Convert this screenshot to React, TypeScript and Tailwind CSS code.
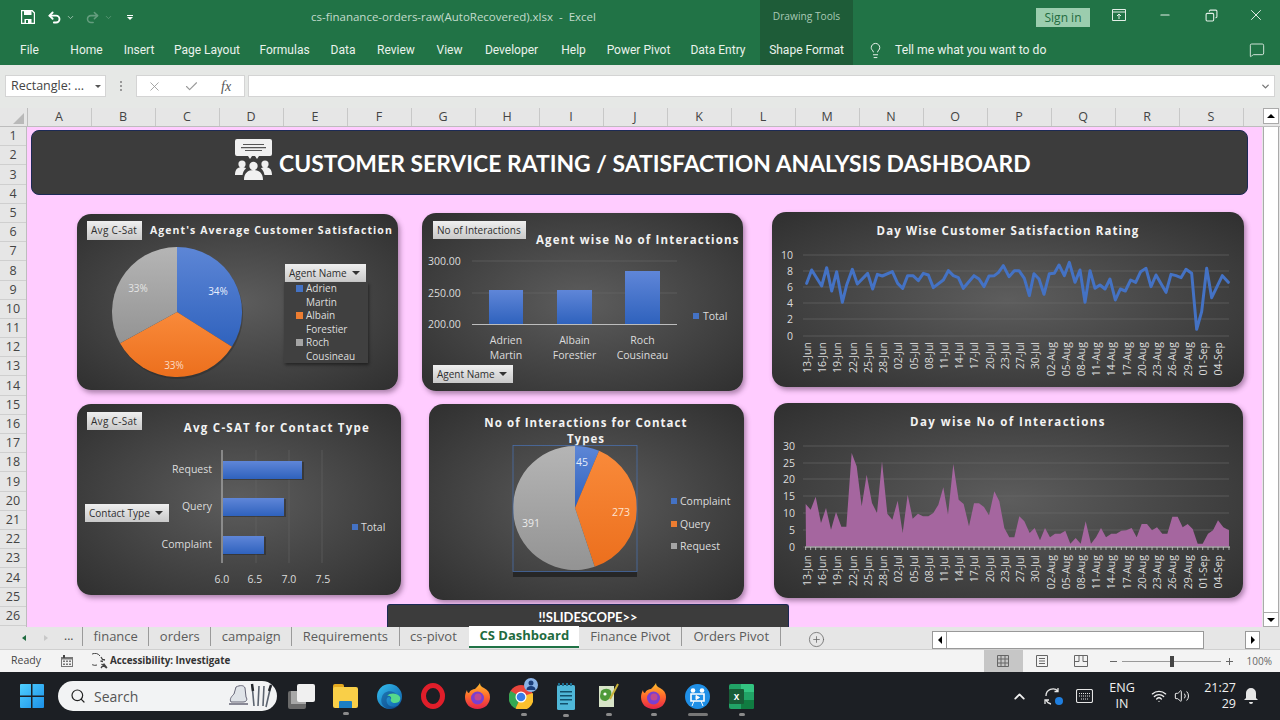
import { Check, ChevronDown, ChevronUp, CirclePlus, Copy, Lightbulb, MessageSquare, Minus, Redo2, Search, Undo2, Volume2, Wifi, X } from 'lucide-react';
import type { ReactNode } from 'react';

const ribbonTabs = [
  { name: 'Home', w: 'w-[33px]' },
  { name: 'Insert', w: 'w-[30px]' },
  { name: 'Page Layout', w: 'w-[64px]' },
  { name: 'Formulas', w: 'w-[49px]' },
  { name: 'Data', w: 'w-[26px]' },
  { name: 'Review', w: 'w-[38px]' },
  { name: 'View', w: 'w-[27px]' },
  { name: 'Developer', w: 'w-[55px]' },
  { name: 'Help', w: 'w-[27px]' },
  { name: 'Power Pivot', w: 'w-[61px]' },
  { name: 'Data Entry', w: 'w-[56px]' },
];
const columns = ['A', 'B', 'C', 'D', 'E', 'F', 'G', 'H', 'I', 'J', 'K', 'L', 'M', 'N', 'O', 'P', 'Q', 'R', 'S'];
const rows = Array.from({ length: 26 }, (_, i) => i + 1);
const dates = ['13-Jun', '16-Jun', '19-Jun', '22-Jun', '25-Jun', '28-Jun', '02-Jul', '05-Jul', '08-Jul', '11-Jul', '14-Jul', '17-Jul', '20-Jul', '23-Jul', '27-Jul', '30-Jul', '02-Aug', '05-Aug', '08-Aug', '11-Aug', '14-Aug', '17-Aug', '20-Aug', '23-Aug', '26-Aug', '29-Aug', '01-Sep', '04-Sep'];

// traced off the reference, in crop coordinates (3x from 765,205)
const ratingLine = [[125,235],[140,195],[170,243],[185,188],[200,258],[215,200],[232,292],[245,240],[262,193],[277,237],[308,205],[323,252],[337,208],[352,213],[382,200],[398,235],[413,250],[428,212],[444,212],[460,227],[475,205],[490,210],[505,248],[535,225],[550,197],[565,212],[580,218],[595,250],[627,212],[642,222],[657,245],[672,213],[688,212],[700,203],[715,182],[732,215],[748,197],[762,197],[778,220],[793,272],[807,206],[822,222],[837,268],[853,206],[868,205],[882,180],[898,212],[913,172],[930,232],[945,195],[960,292],[975,197],[990,250],[1005,240],[1020,252],[1035,222],[1051,285],[1066,252],[1081,258],[1097,225],[1112,232],[1127,200],[1143,190],[1158,245],[1173,210],[1203,262],[1218,208],[1233,212],[1248,218],[1263,193],[1280,205],[1295,373],[1310,320],[1325,190],[1340,278],[1372,212],[1390,232]];

// same idea, 3x from 765,398
const interactionsArea = [[122,318],[137,335],[152,296],[168,375],[183,330],[198,395],[213,342],[229,386],[244,386],[260,165],[275,205],[290,325],[305,230],[321,315],[336,345],[351,190],[367,347],[382,365],[398,308],[413,405],[428,290],[443,362],[459,347],[474,355],[490,355],[505,345],[520,320],[535,268],[549,350],[565,198],[581,305],[596,318],[612,385],[627,316],[642,316],[657,327],[672,352],[688,280],[703,310],[718,390],[733,418],[748,418],[763,355],[778,370],[794,405],[809,390],[825,427],[840,390],[855,418],[870,407],[886,407],[901,398],[916,437],[932,420],[947,437],[962,370],[978,437],[993,418],[1008,390],[1023,418],[1039,407],[1054,407],[1069,398],[1084,397],[1100,390],[1115,418],[1130,378],[1146,378],[1161,397],[1176,388],[1192,407],[1207,407],[1222,356],[1238,356],[1253,388],[1268,378],[1283,393],[1298,437],[1313,437],[1329,407],[1344,397],[1359,367],[1375,388],[1392,397]];

const label = "font-['Open_Sans'] fill-[#dcdcdc]";
const title = "font-['Open_Sans'] font-bold fill-[#f2f2f2]";

function slicePath(cx: number, cy: number, r: number, from: number, to: number) {
  const a = (from * 2 - 0.5) * Math.PI;
  const b = (to * 2 - 0.5) * Math.PI;
  const large = to - from > 0.5 ? 1 : 0;
  return `M${cx} ${cy}L${cx + r * Math.cos(a)} ${cy + r * Math.sin(a)}A${r} ${r} 0 ${large} 1 ${cx + r * Math.cos(b)} ${cy + r * Math.sin(b)}Z`;
}

function Card({ className, children }: { className: string; children: ReactNode }) {
  return (
    <div className={`relative shrink-0 rounded-[14px] bg-[radial-gradient(ellipse_at_center,#5d5d5d_0%,#484848_45%,#2f2f2f_100%)] shadow-[2px_3px_5px_rgba(70,40,70,0.45)] ${className}`}>
      {children}
    </div>
  );
}

function FieldButton({ text, arrow, className }: { text: string; arrow?: boolean; className: string }) {
  return (
    <div className={`absolute flex items-center justify-between px-[4px] bg-gradient-to-b from-[#efefef] to-[#c9c9c9] text-[#2e2e2e] text-[10px] ${className}`}>
      <span className="whitespace-nowrap">{text}</span>
      {arrow && <span className="w-0 h-0 mr-[2px] border-x-[4px] border-x-transparent border-t-[4px] border-t-[#333]" />}
    </div>
  );
}

function PieDefs() {
  return (
    <defs>
      <linearGradient id="pieBlue" x1="0" y1="0" x2="0" y2="1"><stop offset="0" stopColor="#5d86d6" /><stop offset="1" stopColor="#2f62bd" /></linearGradient>
      <linearGradient id="pieOrange" x1="0" y1="0" x2="0" y2="1"><stop offset="0" stopColor="#f98a3a" /><stop offset="1" stopColor="#ec6f1d" /></linearGradient>
      <linearGradient id="pieGray" x1="0" y1="0" x2="0" y2="1"><stop offset="0" stopColor="#b5b5b5" /><stop offset="1" stopColor="#939393" /></linearGradient>
      <linearGradient id="barBlue" x1="0" y1="0" x2="0" y2="1"><stop offset="0" stopColor="#5f86d8" /><stop offset="1" stopColor="#2f62bd" /></linearGradient>
    </defs>
  );
}

function AgentPie() {
  return (
    <svg viewBox="77 214 321 176" className="block w-full h-full">
      <PieDefs />
      <text x="150" y="234" fontSize="10.5" letterSpacing="1.08" className={title}>Agent's Average Customer Satisfaction</text>
      <circle cx="178" cy="314" r="65" fill="#222" opacity="0.35" />
      <path d={slicePath(177, 312, 65, 0, 0.34)} fill="url(#pieBlue)" />
      <path d={slicePath(177, 312, 65, 0.34, 0.67)} fill="url(#pieOrange)" />
      <path d={slicePath(177, 312, 65, 0.67, 1)} fill="url(#pieGray)" />
      <text x="218" y="295" fontSize="10" textAnchor="middle" className="font-['Open_Sans'] fill-[#e8eefc]">34%</text>
      <text x="174" y="369" fontSize="10" textAnchor="middle" className="font-['Open_Sans'] fill-[#fbdcc6]">33%</text>
      <text x="138" y="292" fontSize="10" textAnchor="middle" className="font-['Open_Sans'] fill-[#e4e4e4]">33%</text>
    </svg>
  );
}

function AgentLegend() {
  const items = [
    { lines: ['Adrien', 'Martin'], swatch: 'bg-[#4472c4]' },
    { lines: ['Albain', 'Forestier'], swatch: 'bg-[#ed7d31]' },
    { lines: ['Roch', 'Cousineau'], swatch: 'bg-[#a5a5a5]' },
  ];
  return (
    <div className="absolute left-[207px] top-[68px] w-[84px] h-[81px] bg-[#404040] shadow-[1px_2px_3px_rgba(0,0,0,0.45)] text-[10px] leading-[13.5px] text-[#dedede]">
      {items.map((item) => (
        <div key={item.lines[0]} className="relative pl-[22px]">
          <span className={`absolute left-[12px] top-[3px] w-[7px] h-[7px] ${item.swatch}`} />
          <div>{item.lines[0]}</div>
          <div>{item.lines[1]}</div>
        </div>
      ))}
    </div>
  );
}

function AgentBars() {
  const bars = [{ x: 489, w: 34, top: 290, name: ['Adrien', 'Martin'] }, { x: 557, w: 35, top: 290, name: ['Albain', 'Forestier'] }, { x: 625, w: 35, top: 271, name: ['Roch', 'Cousineau'] }];
  return (
    <svg viewBox="422 213 321 178" className="block w-full h-full">
      <PieDefs />
      <text x="536" y="244" fontSize="11.5" letterSpacing="1.17" className={title}>Agent wise No of Interactions</text>
      {[261, 293].map((y) => <line key={y} x1="472" x2="677" y1={y} y2={y} stroke="#6a6a6a" strokeWidth="0.6" />)}
      <line x1="472" x2="677" y1="324.5" y2="324.5" stroke="#bdbdbd" />
      {[['300.00', 265], ['250.00', 297], ['200.00', 328]].map(([t, y]) => <text key={t} x="428" y={y} fontSize="10.5" className={label}>{t}</text>)}
      {bars.map((b) => (
        <g key={b.x}>
          <rect x={b.x} y={b.top} width={b.w} height={324 - b.top} fill="url(#barBlue)" />
          <text x={b.x + b.w / 2} y="344" fontSize="10.5" textAnchor="middle" className={label}>{b.name[0]}</text>
          <text x={b.x + b.w / 2} y="359" fontSize="10.5" textAnchor="middle" className={label}>{b.name[1]}</text>
        </g>
      ))}
      <rect x="693" y="313" width="6" height="6" fill="#4472c4" />
      <text x="703" y="320" fontSize="10.5" className={label}>Total</text>
    </svg>
  );
}

function DateAxis({ top }: { top: number }) {
  return (
    <>
      {dates.map((d, i) => (
        <text key={d} transform={`translate(${807 + i * 15.22} ${top}) rotate(-90)`} textAnchor="end" dominantBaseline="central" fontSize="10.5" className={label}>{d}</text>
      ))}
    </>
  );
}

function RatingChart() {
  const pts = ratingLine.map(([x, y]) => `${x / 3 + 765},${y / 3 + 205}`).join(' ');
  return (
    <svg viewBox="772 212 472 175" className="block w-full h-full">
      <text x="1008" y="235" fontSize="11.5" letterSpacing="1.1" textAnchor="middle" className={title}>Day Wise Customer Satisfaction Rating</text>
      {[[10, 255], [8, 271], [6, 287], [4, 303], [2, 319], [0, 336]].map(([v, y]) => (
        <g key={v}>
          <line x1="803" x2="1229" y1={y} y2={y} stroke="#6c6c6c" strokeWidth="0.6" />
          <text x="793" y={y + 4} fontSize="10.5" textAnchor="end" className={label}>{v}</text>
        </g>
      ))}
      <polyline points={pts} fill="none" stroke="#4472c4" strokeWidth="3" strokeLinejoin="round" strokeLinecap="round" />
      <DateAxis top={342} />
    </svg>
  );
}

function ContactBars() {
  const bars = [{ name: 'Request', y: 461, right: 302 }, { name: 'Query', y: 498, right: 284 }, { name: 'Complaint', y: 536, right: 264 }];
  return (
    <svg viewBox="77 404 324 191" className="block w-full h-full">
      <PieDefs />
      <text x="277" y="432" fontSize="11.5" letterSpacing="1.25" textAnchor="middle" className={title}>Avg C-SAT for Contact Type</text>
      {[256, 289, 322].map((x) => <line key={x} x1={x} x2={x} y1="450" y2="563" stroke="#666" strokeWidth="0.6" />)}
      {bars.map((b) => (
        <g key={b.name}>
          <rect x="223" y={b.y + 1} width={b.right - 221} height="18" fill="#222" opacity="0.45" />
          <rect x="223" y={b.y} width={b.right - 223} height="18" fill="url(#barBlue)" />
          <text x="212" y={b.y + 12} fontSize="10.5" textAnchor="end" className={label}>{b.name}</text>
        </g>
      ))}
      <line x1="222" x2="222" y1="450" y2="563" stroke="#c4c4c4" />
      {[['6.0', 222], ['6.5', 255], ['7.0', 289], ['7.5', 323]].map(([t, x]) => <text key={t} x={x} y="583" fontSize="10.5" textAnchor="middle" className={label}>{t}</text>)}
      <rect x="352" y="524" width="6" height="6" fill="#4472c4" />
      <text x="361" y="531" fontSize="10.5" className={label}>Total</text>
    </svg>
  );
}

function ContactPie() {
  const a = 45 / 709;
  const b = a + 273 / 709;
  return (
    <svg viewBox="429 404 315 196" className="block w-full h-full">
      <PieDefs />
      <text x="586" y="427" fontSize="11.5" letterSpacing="1.05" textAnchor="middle" className={title}>No of Interactions for Contact</text>
      <text x="586" y="443" fontSize="11.5" letterSpacing="1.05" textAnchor="middle" className={title}>Types</text>
      <rect x="513" y="571" width="124" height="6" fill="#262626" />
      <path d={slicePath(575, 508, 62, 0, a)} fill="url(#pieBlue)" />
      <path d={slicePath(575, 508, 62, a, b)} fill="url(#pieOrange)" />
      <path d={slicePath(575, 508, 62, b, 1)} fill="url(#pieGray)" />
      <rect x="513" y="445.5" width="124" height="126" fill="none" stroke="#4a6ea8" strokeWidth="0.8" />
      <text x="582" y="466" fontSize="10.5" textAnchor="middle" className="font-['Open_Sans'] fill-[#e4ecfa]">45</text>
      <text x="621" y="516" fontSize="10.5" textAnchor="middle" className="font-['Open_Sans'] fill-[#fde3d0]">273</text>
      <text x="531" y="527" fontSize="10.5" textAnchor="middle" className="font-['Open_Sans'] fill-[#ececec]">391</text>
      {[['Complaint', 501, '#4472c4'], ['Query', 524, '#ed7d31'], ['Request', 546, '#a5a5a5']].map(([t, y, c]) => (
        <g key={t as string}>
          <rect x="671" y={(y as number) - 3} width="6" height="6" fill={c as string} />
          <text x="680" y={(y as number) + 4} fontSize="10.5" className={label}>{t}</text>
        </g>
      ))}
    </svg>
  );
}

function InteractionsChart() {
  const pts = interactionsArea.map(([x, y]) => `${x / 3 + 765},${y / 3 + 398}`);
  return (
    <svg viewBox="774 403 469 195" className="block w-full h-full">
      <text x="1008" y="426" fontSize="11.5" letterSpacing="1.4" textAnchor="middle" className={title}>Day wise No of Interactions</text>
      {[[30, 446], [25, 463], [20, 479], [15, 496], [10, 513], [5, 530], [0, 547]].map(([v, y]) => (
        <g key={v}>
          <line x1="803" x2="1229" y1={y} y2={y} stroke="#6c6c6c" strokeWidth="0.6" />
          <text x="795" y={y + 4} fontSize="10.5" textAnchor="end" className={label}>{v}</text>
        </g>
      ))}
      <polygon points={`806,546.5 ${pts.join(' ')} 1229,546.5`} fill="#a5669f" />
      <line x1="805" x2="1230" y1="547" y2="547" stroke="#c9c9c9" />
      {interactionsArea.map(([x]) => <line key={x} x1={x / 3 + 765} x2={x / 3 + 765} y1="547" y2="550" stroke="#c9c9c9" strokeWidth="0.8" />)}
      <DateAxis top={555} />
    </svg>
  );
}

function PeopleIcon() {
  return (
    <svg viewBox="0 0 37 41" className="w-[37px] h-[41px] -mt-[6px] fill-[#f0f0f0]">
      <path d="M2 0h33a2 2 0 0 1 2 2v13a2 2 0 0 1-2 2H24l-2 3-2-3h-3l-2 3-2-3H2a2 2 0 0 1-2-2V2a2 2 0 0 1 2-2z" />
      <path d="M8 5h21v1H8zM6 8h25v1.2H6zM10 11h17v1H10z" fill="#555" />
      <circle cx="7" cy="25" r="3.6" /><circle cx="30" cy="25" r="3.6" /><circle cx="18.5" cy="27" r="4.2" />
      <path d="M0 36c0-6 3-8 7-8 2 0 3 .5 4 1.5-2 1.500-3 3.500-3.500 6.500zM37 36c0-6-3-8-7-8-2 0-3 .5-4 1.500 2 1.500 3 3.500 3.500 6.500zM9 41c0-7 4-10 9.500-10S28 34 28 41z" />
    </svg>
  );
}

function QuickAccess() {
  return (
    <div className="w-[311px] shrink-0 flex items-center pl-[21px] text-white">
      <svg viewBox="0 0 14 14" className="w-[14px] h-[14px]">
        <path d="M0.5 0.500H11L13.500 3V13.500H0.500z" fill="none" stroke="#fff" strokeWidth="1.400" />
        <path d="M3 1h7.500v4H3zM3.500 9h7v4.500h-7z" fill="#fff" />
        <path d="M5 10h2v3H5z" fill="#217346" />
      </svg>
      <Undo2 size={15} strokeWidth={3} className="ml-[12px]" />
      <ChevronDown size={9} className="ml-[4px] opacity-70" />
      <Redo2 size={15} strokeWidth={2.500} className="ml-[10px] opacity-30" />
      <ChevronDown size={9} className="ml-[4px] opacity-30" />
      <span className="ml-[14px] flex flex-col items-center gap-[1px]">
        <span className="w-[6px] h-[1px] bg-white" />
        <span className="w-0 h-0 border-x-[3px] border-x-transparent border-t-[3px] border-t-white" />
      </span>
    </div>
  );
}

function TitleBar() {
  return (
    <div className="h-[34px] flex items-stretch bg-[#217346] text-[#c3dbcc] text-[11.5px]">
      <QuickAccess />
      <div className="w-[449px] shrink-0 flex items-center whitespace-nowrap">cs-finanance-orders-raw(AutoRecovered).xlsx&nbsp; -&nbsp; Excel</div>
      <div className="w-[93px] shrink-0 bg-[#1e5c38] flex items-center justify-center text-[10.2px] text-[#a9c9b5]">Drawing Tools</div>
      <div className="flex-1 flex items-start justify-end text-[#e3efe7]">
        <div className="mt-[8px] w-[54px] h-[19px] bg-[#9bcdae] text-[#1f6b40] text-[12px] flex items-center justify-center">Sign in</div>
        <div className="w-[190px] h-[30px] flex items-center">
          <svg viewBox="0 0 14 12" className="ml-[22px] w-[14px] h-[12px] fill-none stroke-current"><path d="M.5.500h13v11H.5zM.5 3h13M7 10V5M5 7l2-2 2 2" /></svg>
          <Minus size={14} className="ml-[32px]" />
          <Copy size={13} className="ml-[33px] -scale-x-100" />
          <X size={18} strokeWidth={1.300} className="ml-[29px]" />
        </div>
      </div>
    </div>
  );
}

function Ribbon() {
  return (
    <div className="h-[31px] flex items-stretch bg-[#217346] text-[#eaf2ec] text-[12px] font-['Roboto']">
      <div className="flex items-center pl-[20px] pt-[1px] w-[70px] shrink-0">File</div>
      <div className="w-[690px] shrink-0 flex items-center gap-[21px] pt-[1px] whitespace-nowrap">
        {ribbonTabs.map((t) => <span key={t.name} className={`${t.w} shrink-0 flex justify-center`}>{t.name}</span>)}
      </div>
      <div className="w-[93px] shrink-0 bg-[#1e5c38] flex items-center justify-center pt-[1px]">Shape Format</div>
      <div className="flex items-center flex-1 pt-[1px]">
        <Lightbulb size={17} strokeWidth={1.400} className="ml-[14px]" />
        <span className="ml-[11px] text-[12.2px]">Tell me what you want to do</span>
        <MessageSquare size={16} strokeWidth={1.300} className="ml-auto mr-[15px]" />
      </div>
    </div>
  );
}

function FormulaBar() {
  return (
    <div className="h-[43px] bg-[#e6e8e6] flex items-start pt-[10px] pl-[5px] pr-[5px] text-[12.500px] text-[#444]">
      <div className="w-[101px] h-[22px] bg-white border border-[#d4d4d4] flex items-center justify-between pl-[5px] pr-[4px] pt-[1px]">
        <span>Rectangle: ...</span>
        <span className="w-0 h-0 border-x-[3px] border-x-transparent border-t-[3px] border-t-[#555]" />
      </div>
      <div className="w-[30px] flex flex-col items-center justify-center gap-[2px] h-[22px]">
        <span className="w-[2px] h-[2px] bg-[#999]" /><span className="w-[2px] h-[2px] bg-[#999]" /><span className="w-[2px] h-[2px] bg-[#999]" />
      </div>
      <div className="w-[109px] h-[22px] bg-white border border-[#d4d4d4] flex items-center pl-[10px] text-[#9a9a9a]">
        <X size={15} strokeWidth={1.400} />
        <Check size={15} strokeWidth={1.800} className="ml-[22px]" />
        <span className="ml-[22px] font-['Liberation_Serif'] italic text-[14px] text-[#555]">fx</span>
      </div>
      <div className="ml-[3px] flex-1 h-[22px] bg-white border border-[#d4d4d4] flex items-center justify-end pr-[3px]">
        <ChevronDown size={11} strokeWidth={3} className="text-[#777]" />
      </div>
    </div>
  );
}

function ColumnHeader() {
  return (
    <div className="h-[19px] flex bg-[#e6e6e6] text-[12.500px] text-[#444] border-b border-[#bdbdbd]">
      <div className="w-[27.5px] shrink-0 border-r border-[#bdbdbd] flex items-end justify-end pr-[3px] pb-[2px]">
        <span className="w-0 h-0 border-l-[11px] border-l-transparent border-b-[11px] border-b-[#b9b9b9]" />
      </div>
      {columns.map((c) => (
        <div key={c} className="w-[64px] shrink-0 border-r border-[#c8c8c8] flex items-center justify-center pt-[1px]">{c}</div>
      ))}
      <div className="flex-1 flex justify-end pr-[1px]">
        <div className="w-[16px] h-[16px] bg-white border border-[#aaa] flex items-center justify-center">
          <span className="w-0 h-0 border-x-[4px] border-x-transparent border-b-[4px] border-b-black" />
        </div>
      </div>
    </div>
  );
}

function Sheet() {
  return (
    <div className="h-[500px] flex">
      <div className="w-[27px] shrink-0 bg-[#e6e6e6] border-r border-[#bdbdbd] text-[12.500px] text-[#444]">
        {rows.map((r) => (
          <div key={r} className="h-[19.2px] flex items-center justify-center border-b border-[#cfcfcf] pt-[1px]">{r}</div>
        ))}
      </div>
      <div className="w-[1235px] shrink-0 bg-[#ffccff] overflow-hidden">
        <div className="ml-[4px] mt-[3px] w-[1217px] h-[65px] rounded-[8px] bg-[#3c3c3c] border border-[#1c2a55] flex items-center pl-[203px]">
          <PeopleIcon />
          <span className="ml-[7px] mt-[2px] text-white font-['Lato'] font-bold text-[22.9px] whitespace-nowrap">CUSTOMER SERVICE RATING / SATISFACTION ANALYSIS DASHBOARD</span>
        </div>
        <div className="mt-[17px] h-[191px] flex items-start pl-[50px]">
          <Card className="mt-[2px] w-[321px] h-[176px]">
            <AgentPie />
            <FieldButton text="Avg C-Sat" className="left-[10px] top-[7px] w-[55px] h-[19px] tracking-[0.3px]" />
            <FieldButton text="Agent Name" arrow className="left-[208px] top-[50px] w-[81px] h-[18px]" />
            <AgentLegend />
          </Card>
          <Card className="ml-[24px] mt-[1px] w-[321px] h-[178px]">
            <AgentBars />
            <FieldButton text="No of Interactions" className="left-[11px] top-[8px] w-[93px] h-[18px]" />
            <FieldButton text="Agent Name" arrow className="left-[11px] top-[152px] w-[80px] h-[18px]" />
          </Card>
          <Card className="ml-[29px] w-[472px] h-[175px]">
            <RatingChart />
          </Card>
        </div>
        <div className="h-[197px] flex items-start pl-[50px]">
          <Card className="mt-[1px] w-[324px] h-[191px]">
            <ContactBars />
            <FieldButton text="Avg C-Sat" className="left-[10px] top-[8px] w-[55px] h-[18px] tracking-[0.3px]" />
            <FieldButton text="Contact Type" arrow className="left-[8px] top-[100px] w-[84px] h-[18px]" />
          </Card>
          <Card className="ml-[28px] mt-[1px] w-[315px] h-[196px]">
            <ContactPie />
          </Card>
          <Card className="ml-[30px] w-[469px] h-[195px]">
            <InteractionsChart />
          </Card>
        </div>
        <div className="mt-[4px] ml-[360px] w-[402px] h-[26px] bg-[#3c3c3c] border-t border-x border-[#1c2a55] rounded-t-[3px] text-white font-['Lato'] font-bold text-[13px] text-center pt-[3px]">!!SLIDESCOPE&gt;&gt;</div>
      </div>
      <div className="w-[18px] shrink-0 bg-[#e6e6e6] flex flex-col items-end pr-[1px]">
        <div className="w-[16px] flex-1 bg-white border-x border-[#aaa]" />
        <div className="w-[16px] h-[15px] bg-white border border-[#aaa] flex items-center justify-center">
          <span className="w-0 h-0 border-x-[4px] border-x-transparent border-t-[4px] border-t-black" />
        </div>
      </div>
    </div>
  );
}

function SheetTabs() {
  const left = ['finance', 'orders', 'campaign', 'Requirements', 'cs-pivot'];
  const right = ['Finance Pivot', 'Orders Pivot'];
  return (
    <div className="h-[23px] flex bg-[#e6e6e6] border-b border-[#d0d0d0] text-[13px] text-[#5c5c5c]">
      <div className="w-[82px] shrink-0 flex items-center text-[#444] text-[12px]">
        <span className="ml-[22px] w-0 h-0 border-y-[3px] border-y-transparent border-r-[4px] border-r-[#1f6b40]" />
        <span className="ml-[18px] w-0 h-0 border-y-[3px] border-y-transparent border-l-[4px] border-l-[#c8c8c8]" />
        <span className="ml-[16px] -mt-[4px]">...</span>
      </div>
      {left.map((t) => (
        <div key={t} className="h-[19px] px-[10.5px] border-l border-[#9a9a9a] flex items-center whitespace-nowrap">{t}</div>
      ))}
      <div className="ml-[2px] -mt-[1px] h-[22px] w-[110px] shrink-0 bg-white border-b-2 border-[#217346] flex items-center justify-center font-bold text-[#1f6b40] text-[13px] whitespace-nowrap">CS Dashboard</div>
      {right.map((t, i) => (
        <div key={t} className={`h-[19px] px-[11px] flex items-center whitespace-nowrap ${i > 0 ? 'border-l border-[#9a9a9a]' : ''}`}>{t}</div>
      ))}
      <div className="h-[19px] border-l border-[#9a9a9a] flex items-center">
        <CirclePlus size={17} strokeWidth={1.100} className="ml-[27px] mt-[6px] text-[#666]" />
      </div>
      <div className="ml-auto mr-[20px] mt-[4px] w-[328px] h-[18px] flex">
        <div className="w-[15px] h-[18px] bg-white border border-[#999] flex items-center justify-center"><span className="w-0 h-0 border-y-[4px] border-y-transparent border-r-[4px] border-r-black" /></div>
        <div className="w-[257px] bg-white border-y border-r border-[#999]" />
        <div className="ml-auto w-[15px] h-[18px] bg-white border border-[#999] flex items-center justify-center"><span className="w-0 h-0 border-y-[4px] border-y-transparent border-l-[4px] border-l-black" /></div>
      </div>
    </div>
  );
}

function StatusBar() {
  return (
    <div className="h-[22px] flex items-center bg-[#f3f3f3] text-[10.500px] text-[#444]">
      <span className="ml-[11px]">Ready</span>
      <svg viewBox="0 0 12 12" className="ml-[20px] w-[12px] h-[12px]">
        <path d="M0 2h12v10H0z" fill="#777" /><path d="M1 4.500h10V11H1z" fill="#f3f3f3" /><path d="M2 5.500h2v1.500H2zM5 5.500h2v1.500H5zM8 5.500h2v1.500H8zM2 8.500h2V10H2zM5 8.500h2V10H5zM8 8.500h2V10H8z" fill="#777" /><path d="M2 0h2v3H2z" fill="#444" />
      </svg>
      <svg viewBox="0 0 16 16" className="ml-[19px] w-[16px] h-[16px] fill-none stroke-[#444]">
        <path d="M8 3a6 6 0 1 0-3 9" /><path d="M9 4l1.500 2.500L13 7M8.500 8l2.500.5M9 15l3-4 3 4M9.500 11l5 4" strokeWidth="1.300" />
      </svg>
      <span className="ml-[2px] font-bold text-[#333] text-[9.8px]">Accessibility: Investigate</span>
      <div className="ml-auto flex items-center h-full">
        <div className="w-[39px] h-full bg-[#c6c6c6] flex items-center justify-center">
          <svg viewBox="0 0 12 12" className="w-[12px] h-[12px] fill-none stroke-[#666]"><path d="M.5.500h11v11H.5zM.5 4h11M.5 8h11M4 .5v11M8 .5v11" /></svg>
        </div>
        <svg viewBox="0 0 12 12" className="ml-[13px] w-[12px] h-[12px] fill-none stroke-[#666]"><path d="M.5.500h11v11H.5zM3 3.500h6M3 6h6M3 8.500h6" /></svg>
        <svg viewBox="0 0 14 12" className="ml-[26px] w-[14px] h-[12px] fill-none stroke-[#666]"><path d="M.5.500h13v11H.5zM5 .5v6H.5M9 .5v6h4.500" /></svg>
        <span className="ml-[22px] w-[7px] h-[1px] bg-[#666]" />
        <div className="relative ml-[5px] w-[99px] h-[1px] bg-[#999]">
          <span className="absolute left-[48px] -top-[5px] w-[4px] h-[11px] bg-[#444]" />
        </div>
        <Plus />
        <span className="ml-[14px] mr-[8px] text-[#666] text-[10px]">100%</span>
      </div>
    </div>
  );
}

function Plus() {
  return (
    <span className="relative ml-[5px] w-[7px] h-[7px]">
      <span className="absolute left-0 top-[3px] w-[7px] h-[1px] bg-[#666]" />
      <span className="absolute left-[3px] top-0 w-[1px] h-[7px] bg-[#666]" />
    </span>
  );
}

function WindowsLogo() {
  return (
    <svg viewBox="0 0 24 24" className="w-[24px] h-[24px]">
      <defs><linearGradient id="winBlue" x1="0" y1="0" x2="1" y2="1"><stop offset="0" stopColor="#4fd0ff" /><stop offset="1" stopColor="#1c90e8" /></linearGradient></defs>
      <path d="M0 1a1 1 0 0 1 1-1h10v11.500H0zM12.500 0H23a1 1 0 0 1 1 1v10.500H12.500zM0 13h11v11H1a1 1 0 0 1-1-1zM12.500 13H24v10a1 1 0 0 1-1 1H12.500z" fill="url(#winBlue)" />
    </svg>
  );
}

function SearchArt() {
  return (
    <svg viewBox="0 0 46 26" className="w-[46px] h-[26px]">
      <path d="M8 4c4-2 8-2 9 1l1 9c2 3 0 5-3 5H3c-2-3 1-6 3-8z" fill="#dfe3e8" stroke="#667" strokeWidth="1" />
      <path d="M1 21h19" stroke="#667" strokeWidth="1.500" />
      <path d="M24 1l2 22M31 3l-1 20M36 3l-1 20M43 2l-5 22" stroke="#5c6470" strokeWidth="1.600" />
      <path d="M24 1l1 7M43 2l-2 6" stroke="#23262b" strokeWidth="2.400" />
    </svg>
  );
}

function Dot({ className = 'bg-[#8b8b8b]' }: { className?: string }) {
  return <span className={`absolute -bottom-[7px] left-1/2 -translate-x-1/2 w-[6px] h-[3px] rounded-full ${className}`} />;
}

function Edge() {
  return (
    <svg viewBox="0 0 25 25" className="w-[25px] h-[25px]">
      <defs><linearGradient id="edgeA" x1="0" y1="0" x2="1" y2="1"><stop offset="0" stopColor="#35c1f1" /><stop offset="1" stopColor="#0c59a4" /></linearGradient></defs>
      <circle cx="12.500" cy="12.500" r="12.500" fill="url(#edgeA)" />
      <path d="M5 13c1-6 10-8 14-3 2 3 1 6-3 6-3 0-2-3-4-3-3 0-4 6 1 9 4 2 9 0 11-4-1 8-15 10-19 2-1-2-1-5 0-7z" fill="#0a2e6e" opacity="0.4" />
      <path d="M10 12c3-4 11-3 13 1 1 3-1 6-5 6-3 0-5-2-4-4 1-2-2-4-4-3z" fill="#55d98c" />
    </svg>
  );
}

function Opera() {
  return (
    <svg viewBox="0 0 24 26" className="w-[24px] h-[26px]">
      <ellipse cx="12" cy="13" rx="9.500" ry="10.500" fill="none" stroke="#e01e2a" strokeWidth="5" />
    </svg>
  );
}

function Firefox() {
  return (
    <svg viewBox="0 0 25 26" className="w-[25px] h-[26px]">
      <defs><linearGradient id="fx" x1="0" y1="0" x2="0" y2="1"><stop offset="0" stopColor="#ffc12e" /><stop offset="0.500" stopColor="#ff6a2b" /><stop offset="1" stopColor="#e5234b" /></linearGradient></defs>
      <path d="M12.500 26C5 26 0 21 0 14c0-3 1-5 2-7 0 2 1 3 2 3 1-3 4-4 6-4 2-2 4-4 5-6 0 3 2 4 4 5 4 2 6 5 6 9 0 7-5 12-12.500 12z" fill="url(#fx)" />
      <circle cx="12.500" cy="15" r="6.500" fill="#7a3fd0" />
      <circle cx="13" cy="14" r="3.500" fill="#c0488f" />
    </svg>
  );
}

function Chrome() {
  return (
    <div className="relative w-[29px] h-[31px]">
      <svg viewBox="0 0 24 24" className="absolute left-0 bottom-0 w-[24px] h-[24px]">
        <circle cx="12" cy="12" r="12" fill="#e8453c" />
        <path d="M12 12L1.600 6a12 12 0 0 0 5 17.500z" fill="#35a853" />
        <path d="M12 12l-5.400 11.500A12 12 0 0 0 23.500 8z" fill="#fbc02d" />
        <circle cx="12" cy="12" r="5.500" fill="#fff" />
        <circle cx="12" cy="12" r="4.300" fill="#3a7de8" />
      </svg>
      <svg viewBox="0 0 14 14" className="absolute right-0 top-0 w-[14px] h-[14px]">
        <circle cx="7" cy="7" r="7" fill="#8ab4e8" />
        <circle cx="7" cy="5" r="2.500" fill="#1b3e7a" />
        <path d="M2.500 12c0-3 2-4 4.500-4s4.500 1 4.500 4z" fill="#1b3e7a" />
      </svg>
    </div>
  );
}

function Notepad() {
  return (
    <svg viewBox="0 0 20 27" className="w-[20px] h-[27px]">
      <rect x="1" y="2" width="18" height="25" rx="1.500" fill="#4fb7d8" />
      <path d="M2 0h2v3H2zM6 0h2v3H6zM10 0h2v3h-2zM14 0h2v3h-2z" fill="#1d6e8f" />
      <path d="M4 8h12v1.500H4zM4 12h12v1.500H4zM4 16h12v1.500H4zM4 20h8v1.500H4z" fill="#12506b" />
    </svg>
  );
}

function NotepadPlus() {
  return (
    <svg viewBox="0 0 22 26" className="w-[22px] h-[26px]">
      <path d="M1 3h15v21H1z" fill="#d8e4c8" />
      <path d="M3 8c3-3 8-3 10 0 1 3 0 8-5 10-3 0-6-1-6-5z" fill="#4f9a3a" />
      <circle cx="7" cy="11" r="1.600" fill="#fff" />
      <path d="M20 1l-8 15" stroke="#c8b23a" strokeWidth="2" />
    </svg>
  );
}

function BlueApp() {
  return (
    <svg viewBox="0 0 25 25" className="w-[25px] h-[25px]">
      <circle cx="12.500" cy="12.500" r="12.500" fill="#1f8fe6" />
      <circle cx="8" cy="6.500" r="2.300" fill="#fff" />
      <circle cx="17" cy="6.500" r="2.300" fill="#fff" />
      <path d="M6 10h13v7H6z" fill="none" stroke="#fff" strokeWidth="1.600" />
      <path d="M11 11.500l3.500 2-3.500 2zM7 22l2-5M18 22l-2-5" fill="#fff" stroke="#fff" />
    </svg>
  );
}

function ExcelIcon() {
  return (
    <div className="relative w-[25px] h-[25px] rounded-[2px] bg-[#21a366] overflow-hidden">
      <span className="absolute left-[12px] top-0 w-[13px] h-[8px] bg-[#33c481]" />
      <span className="absolute left-[12px] top-[16px] w-[13px] h-[9px] bg-[#107c41]" />
      <span className="absolute left-0 top-[5px] w-[15px] h-[15px] rounded-[1px] bg-[#185c37] text-white text-[10px] font-bold flex items-center justify-center font-['Liberation_Sans']">x</span>
    </div>
  );
}

function Taskbar() {
  return (
    <div className="h-[48px] flex items-center bg-[#1c1f24] text-[#f0f0f0]">
      <div className="ml-[20px]"><WindowsLogo /></div>
      <div className="ml-[14px] w-[219px] h-[30px] rounded-full bg-[#f2f3f4] flex items-center pl-[12px] pr-[3px] text-[#555] text-[14px]">
        <Search size={16} strokeWidth={1.800} className="text-[#222]" />
        <span className="ml-[8px]">Search</span>
        <span className="ml-auto"><SearchArt /></span>
      </div>
      <div className="relative ml-[11px] w-[27px] h-[25px]">
        <span className="absolute left-0 bottom-0 w-[18px] h-[18px] rounded-[2px] bg-[#6a6a6a]" />
        <span className="absolute left-[3px] top-[7px] w-[15px] h-[13px] bg-[#a8a8a8]" />
        <span className="absolute right-0 top-0 w-[18px] h-[18px] rounded-[2px] bg-[#f0f0f0]" />
      </div>
      <div className="relative ml-[18px] w-[25px] h-[24px]">
        <span className="absolute left-0 top-0 w-[11px] h-[5px] rounded-t-[2px] bg-[#e5a91f]" />
        <span className="absolute inset-x-0 bottom-0 top-[3px] rounded-[2px] bg-[#f9cf48]" />
        <span className="absolute left-[6px] right-[6px] bottom-0 h-[7px] rounded-t-[1px] bg-[#1c7fc4]" />
        <Dot />
      </div>
      <div className="ml-[19px] leading-none"><Edge /></div>
      <div className="ml-[19px] leading-none"><Opera /></div>
      <div className="ml-[20px] leading-none"><Firefox /></div>
      <div className="relative ml-[19px] -mt-[5px]"><Chrome /><Dot /></div>
      <div className="relative ml-[18px] leading-none"><Notepad /><Dot /></div>
      <div className="relative ml-[22px] leading-none"><NotepadPlus /><Dot /></div>
      <div className="relative ml-[21px] leading-none"><Firefox /><Dot /></div>
      <div className="relative ml-[19px] leading-none"><BlueApp /><Dot className="bg-[#777] w-[20px]" /></div>
      <div className="relative ml-[19px]"><ExcelIcon /><Dot /></div>
      <ChevronUp size={17} strokeWidth={2.500} className="ml-[257px]" />
      <div className="relative ml-[15px] w-[20px] h-[20px]">
        <svg viewBox="0 0 20 20" className="w-[20px] h-[20px] fill-none stroke-[#e6e6e6]" strokeWidth="1.300"><path d="M3 10a7 7 0 0 1 12-5M15 2v3.500h-3.500M8 18a7 7 0 0 1-5-4M2 18v-4h4" /></svg>
        <span className="absolute right-0 bottom-[1px] w-[8px] h-[8px] rounded-full bg-[#1f7fe0]" />
      </div>
      <svg viewBox="0 0 17 14" className="ml-[13px] w-[17px] h-[14px] fill-none stroke-[#e6e6e6]" strokeWidth="1.100"><rect x=".5" y=".5" width="16" height="13" rx="1.500" /><path d="M3 4.500h11M3 7h11M5 10h7" strokeDasharray="1 1" /></svg>
      <div className="ml-[17px] w-[24px] flex flex-col items-center text-[12.500px] leading-[16px]"><span>ENG</span><span>IN</span></div>
      <Wifi size={16} className="ml-[17px]" />
      <Volume2 size={16} strokeWidth={1.500} className="ml-[7px]" />
      <div className="ml-[16px] w-[30px] flex flex-col items-end text-[12.500px] leading-[16px]"><span>21:27</span><span>29</span></div>
      <svg viewBox="0 0 16 18" className="ml-[7px] w-[16px] h-[18px] fill-[#e6e6e6]"><path d="M8 1a5 5 0 0 1 5 5v5l2 2H1l2-2V6a5 5 0 0 1 5-5zM6 15h4a2 2 0 0 1-4 0z" /></svg>
    </div>
  );
}

export default function App() {
  return (
    <div className="w-[1280px] h-[720px] overflow-hidden flex flex-col font-['Open_Sans',sans-serif]">
      <TitleBar />
      <Ribbon />
      <FormulaBar />
      <ColumnHeader />
      <Sheet />
      <SheetTabs />
      <StatusBar />
      <Taskbar />
    </div>
  );
}
